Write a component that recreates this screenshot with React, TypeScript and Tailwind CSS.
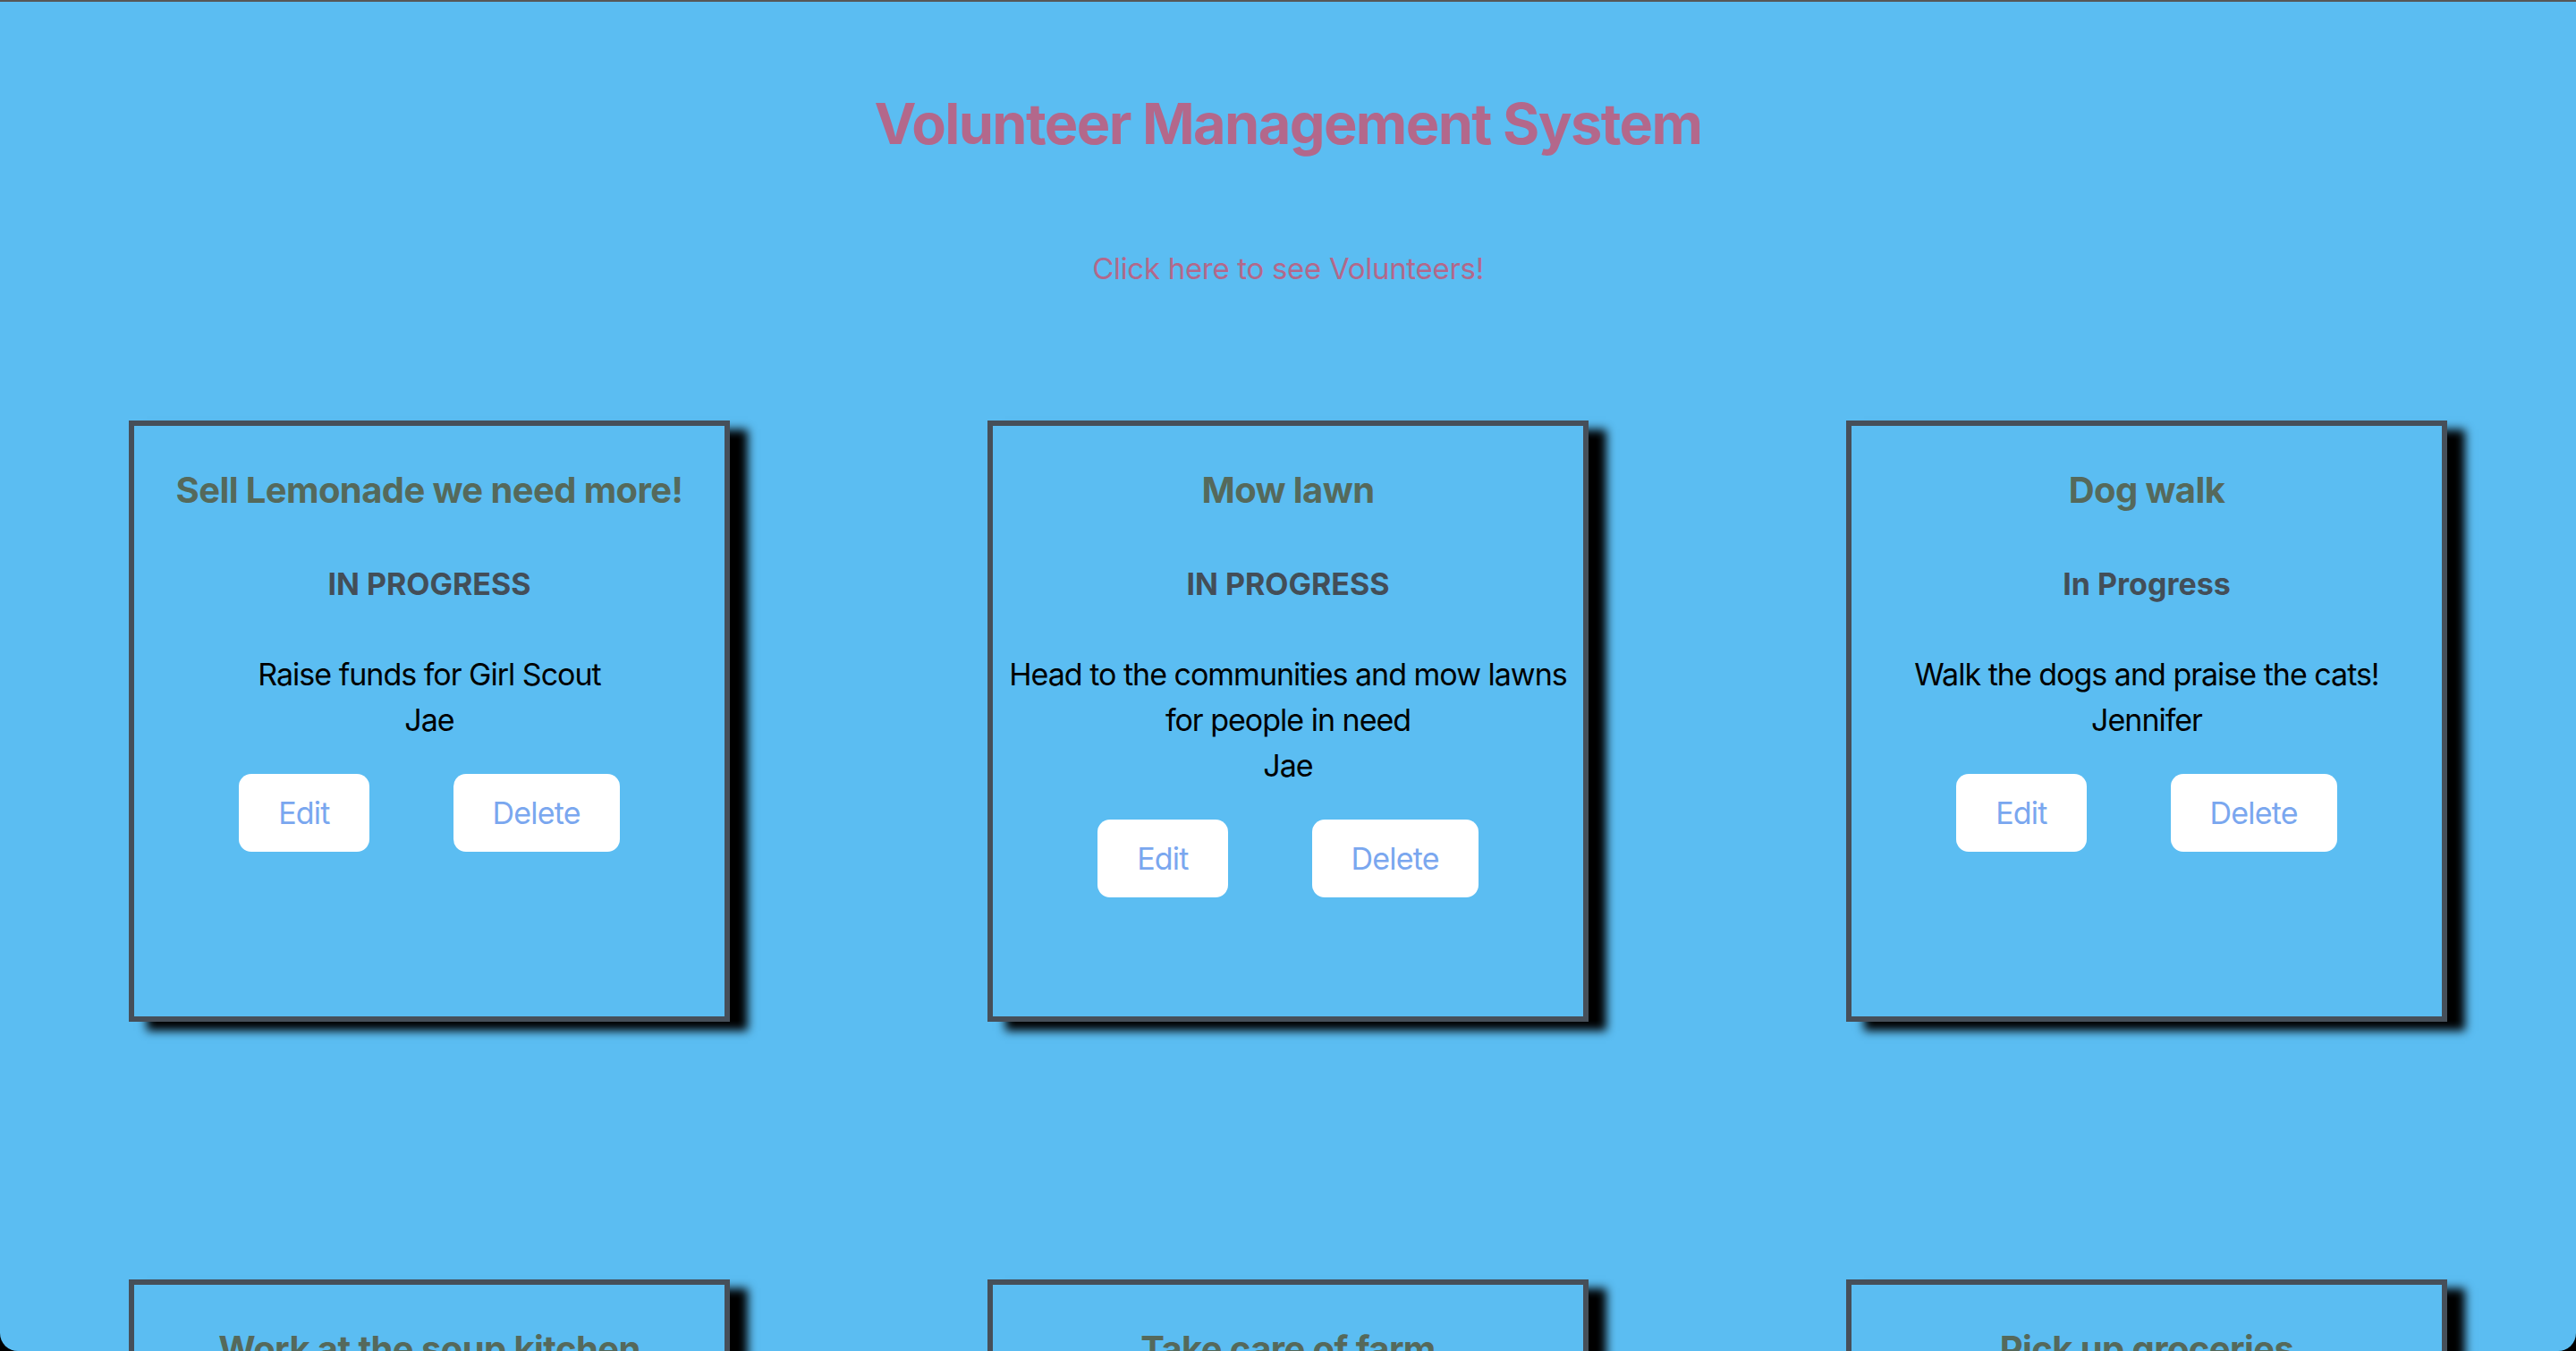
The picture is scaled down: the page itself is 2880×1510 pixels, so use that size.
import React from 'react';

interface Task {
  title: string;
  status: string;
  description: string;
  volunteer: string;
}

const tasks: Task[] = [
  { title: 'Sell Lemonade we need more!', status: 'IN PROGRESS', description: 'Raise funds for Girl Scout', volunteer: 'Jae' },
  { title: 'Mow lawn', status: 'IN PROGRESS', description: 'Head to the communities and mow lawns for people in need', volunteer: 'Jae' },
  { title: 'Dog walk', status: 'In Progress', description: 'Walk the dogs and praise the cats!', volunteer: 'Jennifer' },
  { title: 'Work at the soup kitchen', status: 'IN PROGRESS', description: 'Serve meals to the neighborhood', volunteer: 'Jae' },
  { title: 'Take care of farm', status: 'IN PROGRESS', description: 'Feed the animals and water the crops', volunteer: 'Jennifer' },
  { title: 'Pick up groceries', status: 'IN PROGRESS', description: 'Deliver groceries to seniors', volunteer: 'Jae' },
];

function TaskCard({ task }: { task: Task }) {
  return (
    <div className="flex h-[672px] w-[672px] flex-col items-center border-[6px] border-[#464f59] px-[8px] pt-[48px] text-center shadow-[20px_10px_10px_#000]">
      <h3 className="text-[40px] font-bold leading-[48px] tracking-[-0.6px] text-[#55695b]">{task.title}</h3>
      <h4 className="mt-[61px] text-[34px] font-bold leading-[40px] text-[#434e58]">{task.status}</h4>
      <div className="mt-[55px] text-[34px] leading-[51px] tracking-[-1px] text-black">
        <p>{task.description}</p>
        <p>{task.volunteer}</p>
      </div>
      <div className="mt-[35px] flex gap-[94px]">
        <button type="button" className="flex h-[87px] items-center rounded-[14px] bg-white px-[44px] text-[34px] leading-[40px] tracking-[-0.8px] text-[#7aa7ef]">
          Edit
        </button>
        <button type="button" className="flex h-[87px] items-center rounded-[14px] bg-white px-[44px] text-[34px] leading-[40px] tracking-[-0.8px] text-[#7aa7ef]">
          Delete
        </button>
      </div>
    </div>
  );
}

export default function App() {
  return (
    <div className="h-[1510px] w-full overflow-hidden bg-black font-['Inter',_'Liberation_Sans',_sans-serif]">
      <div className="h-full overflow-hidden rounded-b-[20px] border-t-2 border-[#575757] bg-[#5bbdf2]">
        <h1 className="mt-[97px] text-center text-[63px] font-bold leading-[78px] tracking-[-1.6px] text-[#b3688b]">
          Volunteer Management System
        </h1>
        <div className="mt-[103px] text-center">
          <a href="#volunteers" className="text-[33px] leading-[40px] tracking-[-0.3px] text-[#b3688b]">
            Click here to see Volunteers!
          </a>
        </div>
        <div className="mt-[150px] grid grid-cols-3 justify-items-center gap-y-[288px]">
          {tasks.map((task) => (
            <TaskCard key={task.title} task={task} />
          ))}
        </div>
      </div>
    </div>
  );
}
